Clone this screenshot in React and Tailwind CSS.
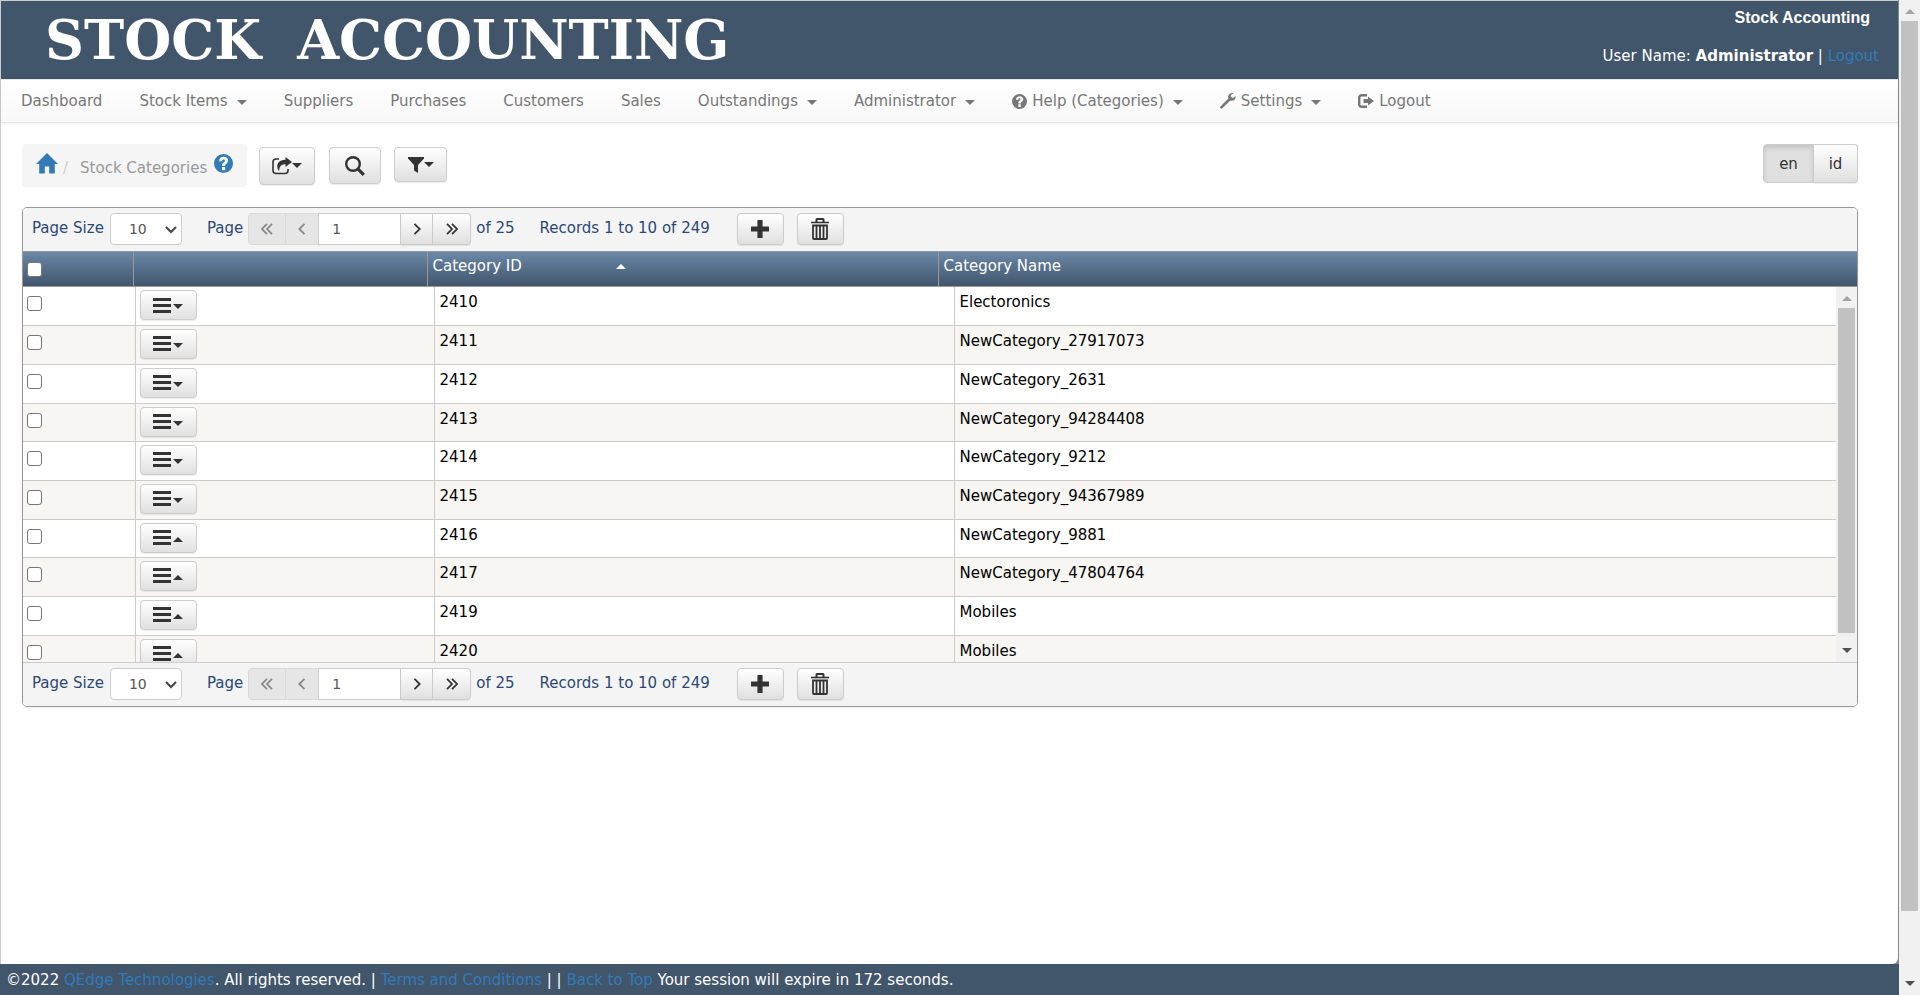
import React from "react";

const rows = [
  ["2410", "Electoronics"],
  ["2411", "NewCategory_27917073"],
  ["2412", "NewCategory_2631"],
  ["2413", "NewCategory_94284408"],
  ["2414", "NewCategory_9212"],
  ["2415", "NewCategory_94367989"],
  ["2416", "NewCategory_9881"],
  ["2417", "NewCategory_47804764"],
  ["2419", "Mobiles"],
  ["2420", "Mobiles"],
];

const buttonLook =
  "flex items-center justify-center border border-[#ccc] bg-linear-to-b from-white to-[#e0e0e0] text-[#333] shadow-[inset_0_1px_0_rgba(255,255,255,0.15),0_1px_1px_rgba(0,0,0,0.075)]";

function Caret({ up = false, className = "" }) {
  return (
    <svg viewBox="0 0 10 5" className={`h-[5px] w-[10px] shrink-0 ${className}`} fill="currentColor" aria-hidden="true">
      <path d={up ? "M0 5h10L5 0z" : "M0 0h10L5 5z"} />
    </svg>
  );
}

function HelpIcon({ className }) {
  return (
    <svg viewBox="0 0 20 20" className={className} fill="currentColor" fillRule="evenodd" aria-hidden="true">
      <path d="M10 0a10 10 0 1 1 0 20a10 10 0 0 1 0-20zM8.4 13.800v3.400h3.400v-3.400zM5.400 7.600h3.200c0-1.200.6-1.800 1.500-1.800s1.400.5 1.400 1.200c0 .8-.5 1.100-1.300 1.700c-1.200.9-1.800 1.700-1.700 3.900h3.100c0-1.100.5-1.600 1.500-2.400c1-.8 1.800-1.700 1.800-3.300c0-2.500-2-3.900-4.500-3.900c-2.900 0-4.900 1.600-5 4.600z" />
    </svg>
  );
}

function HomeIcon() {
  return (
    <svg viewBox="0 0 22 21" className="h-[21px] w-[22px]" fill="currentColor" aria-hidden="true">
      <path d="M11 0l11 11h-3.200v9.400h-5.600v-7h-4.400v7H3.200V11H0z" />
    </svg>
  );
}

function ExportIcon() {
  return (
    <svg viewBox="0 0 20 18" className="h-[18px] w-[20px]" aria-hidden="true">
      <path d="M7 2H4A3 3 0 0 0 1 5v8.500a3 3 0 0 0 3 3h9a3 3 0 0 0 3-3V12" fill="none" stroke="currentColor" strokeWidth="1.600" />
      <path d="M13.500 0l6.500 5l-6.500 5V7.200C10 7.200 7.500 8.500 7.200 13.500H6.500C3.500 8 6 2.800 13.500 2.800z" fill="currentColor" />
    </svg>
  );
}

function SearchIcon() {
  return (
    <svg viewBox="0 0 20 20" className="h-[20px] w-[20px]" fill="none" stroke="currentColor" aria-hidden="true">
      <circle cx="8" cy="8" r="6.800" strokeWidth="2.400" />
      <path d="M12.800 12.800l6 6" strokeWidth="3.200" />
    </svg>
  );
}

function FilterIcon() {
  return (
    <svg viewBox="0 0 16 16" className="h-[16px] w-[16px]" fill="currentColor" aria-hidden="true">
      <path d="M0 0h16v1.400L10 8v8L6 13.500V8L0 1.400z" />
    </svg>
  );
}

function WrenchIcon() {
  return (
    <svg viewBox="0 0 16 16" className="h-[16px] w-[16px]" fill="currentColor" aria-hidden="true">
      <path d="M15.600 3.200l-2.900 1.700l-1.800-1.200l.1-2L13.600.2C11.500-.5 9 .6 8.300 2.800c-.3 1-.2 1.900.1 2.700L.7 13.300c-.8.8-.8 1.400-.1 2s1.300.6 2-.2l7.600-7.700c2.700 1.100 5.900-.9 5.400-4.200z" />
    </svg>
  );
}

function LogoutIcon() {
  return (
    <svg viewBox="0 0 16 14" className="h-[14px] w-[16px]" aria-hidden="true">
      <path d="M9 1.200H3.700A2.500 2.500 0 0 0 1.200 3.700v6.600a2.500 2.500 0 0 0 2.500 2.500H9" fill="none" stroke="currentColor" strokeWidth="2.400" />
      <path d="M10 2.500L16 7l-6 4.500V9H5.500V5H10z" fill="currentColor" />
    </svg>
  );
}

function PlusIcon() {
  return (
    <svg viewBox="0 0 18 18" className="h-[18px] w-[18px]" fill="currentColor" aria-hidden="true">
      <path d="M7 0h4q.6 0 .6.600V6.400h5.800q.6 0 .6.600v4q0 .6-.6.600h-5.800v5.800q0 .6-.6.600H7q-.6 0-.6-.6v-5.800H.6Q0 11.600 0 11V7q0-.6.600-.6h5.800V.6Q6.400 0 7 0z" />
    </svg>
  );
}

function TrashIcon() {
  return (
    <svg viewBox="0 0 18 22" className="h-[22px] w-[18px]" aria-hidden="true" fill="none" stroke="currentColor">
      <path d="M5.500 4V1.500Q5.500 1 6 1h6q.5 0 .5.500V4" strokeWidth="2" />
      <path d="M0 4.500h18" strokeWidth="1.600" />
      <path d="M2 7.500h14V20q0 1-1 1H3q-1 0-1-1zM5.500 8v12M9 8v12M12.500 8v12" strokeWidth="1.800" />
    </svg>
  );
}

function MenuIcon() {
  return (
    <svg viewBox="0 0 18 15" className="h-[15px] w-[18px]" fill="currentColor" aria-hidden="true">
      <path d="M0 0h18v3H0zM0 6h18v3H0zM0 12h18v3H0z" />
    </svg>
  );
}

function Chevrons({ double = false, left = false }) {
  return (
    <svg viewBox="0 0 12 12" className={`h-[12px] w-[12px] ${left ? "rotate-180" : ""}`} fill="none" stroke="currentColor" strokeWidth="1.800" aria-hidden="true">
      <path d={double ? "M1 .8L6 6L1 11.200M6 .8L11 6L6 11.200" : "M3.500.8L8.700 6L3.500 11.200"} />
    </svg>
  );
}

function Pager({ name }) {
  return (
    <div className="flex h-[43px] items-center bg-[#f4f4f4] pb-[2px] pl-[9px] text-[#2c4875]">
      <label htmlFor={`${name}-size`}>Page Size</label>
      <div className="relative ml-[6px]">
        <select
          id={`${name}-size`}
          defaultValue="10"
          className="block h-[32px] w-[72px] appearance-none rounded-[4px] border border-[#ccc] bg-white pt-[2px] pl-[18px] text-[14px] text-[#555]"
        >
          <option>10</option>
          <option>20</option>
          <option>50</option>
        </select>
        <svg viewBox="0 0 12 8" className="pointer-events-none absolute top-[13px] right-[5px] h-[8px] w-[12px] text-[#444]" fill="none" stroke="currentColor" strokeWidth="2" aria-hidden="true">
          <path d="M1 1l5 5l5-5" />
        </svg>
      </div>
      <label htmlFor={`${name}-page`} className="ml-[25px]">Page</label>
      <div className="ml-[5px] flex h-[32px]">
        <button aria-label="First page" disabled className="flex w-[38px] items-center justify-center rounded-l-[4px] border border-[#d9d9d9] bg-[#e6e6e6] text-[#888]">
          <Chevrons double left />
        </button>
        <button aria-label="Previous page" disabled className="flex w-[32px] items-center justify-center border-y border-[#d9d9d9] bg-[#e6e6e6] text-[#888]">
          <Chevrons left />
        </button>
        <input id={`${name}-page`} defaultValue="1" className="w-[83px] border border-[#ccc] bg-white px-[13px] pt-[2px] text-[14px] text-[#555]" />
        <button aria-label="Next page" className={`${buttonLook} w-[32px] border-l-0`}>
          <Chevrons />
        </button>
        <button aria-label="Last page" className={`${buttonLook} w-[38px] rounded-r-[4px] border-l-0`}>
          <Chevrons double />
        </button>
      </div>
      <span className="ml-[5px]">of 25</span>
      <span className="ml-[25px]">Records 1 to 10 of 249</span>
      <button aria-label="Add" className={`${buttonLook} ml-[27px] h-[32px] w-[47px] rounded-[4px]`}>
        <PlusIcon />
      </button>
      <button aria-label="Delete" className={`${buttonLook} ml-[13px] h-[32px] w-[47px] rounded-[4px]`}>
        <TrashIcon />
      </button>
    </div>
  );
}

const checkLook = "block size-[15px] appearance-none rounded-[3px] border border-[#767676] bg-white";

function Grid() {
  return (
    <section className="mt-[20px] overflow-hidden rounded-[5px] border border-[#999] shadow-[0_1px_3px_rgba(0,0,0,0.08)]">
      <Pager name="top" />
      <table className="h-[36px] w-full table-fixed border-y border-[#999] bg-linear-to-b from-[#6b89a8] to-[#41556b] text-left text-white">
        <colgroup>
          <col className="w-[110px]" />
          <col className="w-[294px]" />
          <col className="w-[511px]" />
          <col />
        </colgroup>
        <thead>
          <tr>
            <th className="border-r border-[#999] pl-[4px]">
              <input type="checkbox" aria-label="Select all" className={checkLook} />
            </th>
            <th className="border-r border-[#999]" aria-label="Actions" />
            <th className="border-r border-[#999] pb-[5px] pl-[5px] font-normal">
              <span className="flex items-center">
                Category ID
                <Caret up className="ml-[94px]" />
              </span>
            </th>
            <th className="pb-[5px] pl-[5px] font-normal">Category Name</th>
          </tr>
        </thead>
      </table>
      <div className="flex h-[375px] overflow-hidden">
        <div className="min-w-0 flex-1">
          <table className="w-full table-fixed text-black">
            <colgroup>
              <col className="w-[112px]" />
              <col className="w-[299px]" />
              <col className="w-[520px]" />
              <col />
            </colgroup>
            <tbody>
              {rows.map(([id, label], i) => (
                <tr key={id} className="h-[39px] border-b border-[#ccc] align-top even:bg-[#f7f6f2] [&:nth-child(3n+1)]:h-[38px]">
                  <td className="border-r border-[#ccc] pt-[9px] pl-[4px]">
                    <input type="checkbox" aria-label={`Select ${id}`} className={checkLook} />
                  </td>
                  <td className="border-r border-[#ccc] pt-[3px] pl-[4px]">
                    <button aria-label={`Actions for ${id}`} className={`${buttonLook} h-[30px] w-[57px] gap-[2px] rounded-[4px]`}>
                      <MenuIcon />
                      <Caret up={i > 5} className="mt-[3px]" />
                    </button>
                  </td>
                  <td className="border-r border-[#ccc] pt-[5px] pl-[5px]">{id}</td>
                  <td className="pt-[5px] pl-[5px]">{label}</td>
                </tr>
              ))}
            </tbody>
          </table>
        </div>
        <Scrollbar thumb="h-[325px]" />
      </div>
      <div className="border-t border-[#ccc]">
        <Pager name="bottom" />
      </div>
    </section>
  );
}

function Scrollbar({ thumb }) {
  return (
    <div className="flex w-[21px] shrink-0 flex-col items-center bg-[#f1f1f1]" aria-hidden="true">
      <div className="flex h-[21px] shrink-0 items-center pt-[2px]">
        <Caret up className="text-[#a3a3a3]" />
      </div>
      <div className={`w-[17px] shrink-0 bg-[#c1c1c1] ${thumb}`} />
      <div className="mt-auto flex h-[23px] shrink-0 items-center">
        <Caret className="text-[#505050]" />
      </div>
    </div>
  );
}

function NavLink({ icon, children, menu = false }) {
  return (
    <a href="#" className="flex items-center whitespace-nowrap">
      {icon && <span className="mr-[5px]">{icon}</span>}
      {children}
      {menu && <Caret className="mt-[3px] ml-[9px]" />}
    </a>
  );
}

export default function App() {
  return (
    <div className="flex h-screen overflow-hidden bg-white font-['Verdana','DejaVu_Sans',sans-serif] text-[15px] leading-[21px]">
      <div className="flex min-w-0 flex-1 flex-col">
        <div className="flex min-h-0 flex-1 flex-col bg-[#888]">
          <div className="mr-px flex flex-1 flex-col rounded-br-[6px] border-l border-l-[#ccc] bg-white">
            <header className="flex h-[79px] justify-between border-t border-[#ccc] bg-[#41556b] pr-[19px] pl-[44px] text-white">
              <h1 className="flex gap-[36px] self-center font-['DejaVu_Serif',serif] text-[54px] leading-[60px] font-bold whitespace-nowrap">
                <span>STOCK</span> <span>ACCOUNTING</span>
              </h1>
              <div className="flex flex-col gap-[18px] pt-[6px] text-right">
                <span className="pr-[9px] font-['Liberation_Sans',sans-serif] text-[16px] font-bold">Stock Accounting</span>
                <span>
                  User Name: <b>Administrator</b> | <a href="#" className="text-[#337ab7]">Logout</a>
                </span>
              </div>
            </header>
            <nav className="flex h-[44px] items-center gap-[37px] border-y border-[#e7e7e7] bg-linear-to-b from-white to-[#f8f8f8] pl-[20px] text-[#777] shadow-[0_1px_5px_rgba(0,0,0,0.075)]">
              <NavLink>Dashboard</NavLink>
              <NavLink menu>Stock Items</NavLink>
              <NavLink>Suppliers</NavLink>
              <NavLink>Purchases</NavLink>
              <NavLink>Customers</NavLink>
              <NavLink>Sales</NavLink>
              <NavLink menu>Outstandings</NavLink>
              <NavLink menu>Administrator</NavLink>
              <NavLink menu icon={<HelpIcon className="size-[15px]" />}>Help (Categories)</NavLink>
              <NavLink menu icon={<WrenchIcon />}>Settings</NavLink>
              <NavLink icon={<LogoutIcon />}>Logout</NavLink>
            </nav>
            <main className="pt-[21px] pr-[40px] pl-[21px]">
              <div className="flex h-[43px] items-center">
                <div className="flex h-[43px] items-center rounded-[4px] bg-[#f5f5f5] px-[14px]">
                  <a href="#" aria-label="Home" className="pb-[4px] text-[#337ab7]"><HomeIcon /></a>
                  <span className="mt-[5px] ml-[5px] text-[#ccc]">/</span>
                  <span className="mt-[5px] ml-[12px] text-[#999]">Stock Categories</span>
                  <a href="#" aria-label="Help" className="ml-[7px] pb-[4px] text-[#337ab7]"><HelpIcon className="size-[19px]" /></a>
                </div>
                <button aria-label="Export" className={`${buttonLook} ml-[12px] h-[38px] w-[56px] rounded-[4px]`}>
                  <ExportIcon />
                  <Caret />
                </button>
                <button aria-label="Search" className={`${buttonLook} ml-[14px] h-[37px] w-[52px] rounded-[4px]`}>
                  <SearchIcon />
                </button>
                <button aria-label="Filter" className={`${buttonLook} mb-[2px] ml-[13px] h-[35px] w-[53px] rounded-[4px]`}>
                  <FilterIcon />
                  <Caret />
                </button>
                <div className="mb-[4px] ml-auto flex h-[39px]">
                  <button aria-pressed="true" className="w-[51px] rounded-l-[4px] border border-[#ccc] bg-[#e0e0e0] pt-[2px] text-[#333] shadow-[inset_0_3px_5px_rgba(0,0,0,0.125)]">en</button>
                  <button className={`${buttonLook} w-[44px] rounded-r-[4px] border-l-0 pt-[2px]`}>id</button>
                </div>
              </div>
              <Grid />
            </main>
          </div>
        </div>
        <footer className="flex h-[31px] shrink-0 items-center bg-[#41556b] pt-[2px] pl-[6px] text-white">
          <p>
            ©2022 <a href="#" className="text-[#337ab7]">QEdge Technologies</a>. All rights reserved. |{" "}
            <a href="#" className="text-[#337ab7]">Terms and Conditions</a> | |{" "}
            <a href="#" className="text-[#337ab7]">Back to Top</a> Your session will expire in 172 seconds.
          </p>
        </footer>
      </div>
      <Scrollbar thumb="h-[890px]" />
    </div>
  );
}
